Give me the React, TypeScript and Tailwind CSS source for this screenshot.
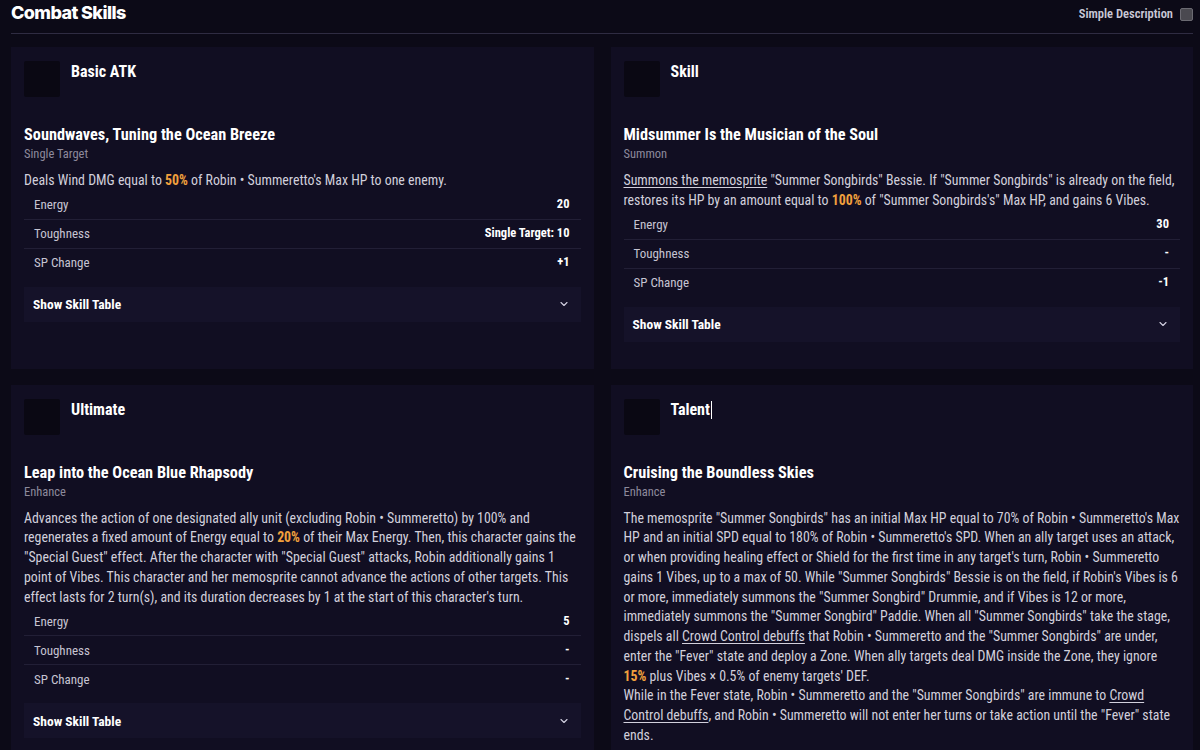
import { ChevronDown } from 'lucide-react';
import type { ReactNode } from 'react';

type Skill = {
  kind: string;
  name: string;
  tag: string;
  desc: ReactNode;
  stats?: [string, string][];
  caret?: boolean;
};

const Hi = ({ children }: { children: ReactNode }) => <span className="font-bold text-[#f2a03d]">{children}</span>;
const Link = ({ children }: { children: ReactNode }) => <span className="underline underline-offset-2">{children}</span>;

const skills: Skill[] = [
  {
    kind: 'Basic ATK',
    name: 'Soundwaves, Tuning the Ocean Breeze',
    tag: 'Single Target',
    desc: <>Deals Wind DMG equal to <Hi>50%</Hi> of Robin • Summeretto's Max HP to one enemy.</>,
    stats: [['Energy', '20'], ['Toughness', 'Single Target: 10'], ['SP Change', '+1']],
  },
  {
    kind: 'Skill',
    name: 'Midsummer Is the Musician of the Soul',
    tag: 'Summon',
    desc: (
      <>
        <Link>Summons the memosprite</Link> "Summer Songbirds" Bessie. If "Summer Songbirds" is already on the field, restores its HP by an amount equal to <Hi>100%</Hi> of "Summer Songbirds's" Max HP, and gains 6 Vibes.
      </>
    ),
    stats: [['Energy', '30'], ['Toughness', '-'], ['SP Change', '-1']],
  },
  {
    kind: 'Ultimate',
    name: 'Leap into the Ocean Blue Rhapsody',
    tag: 'Enhance',
    desc: (
      <>
        Advances the action of one designated ally unit (excluding Robin • Summeretto) by 100% and regenerates a fixed amount of Energy equal to <Hi>20%</Hi> of their Max Energy. Then, this character gains the "Special Guest" effect. After the character with "Special Guest" attacks, Robin additionally gains 1 point of Vibes. This character and her memosprite cannot advance the actions of other targets. This effect lasts for 2 turn(s), and its duration decreases by 1 at the start of this character's turn.
      </>
    ),
    stats: [['Energy', '5'], ['Toughness', '-'], ['SP Change', '-']],
  },
  {
    kind: 'Talent',
    name: 'Cruising the Boundless Skies',
    tag: 'Enhance',
    caret: true,
    desc: (
      <>
        The memosprite "Summer Songbirds" has an initial Max HP equal to 70% of Robin • Summeretto's Max HP and an initial SPD equal to 180% of Robin • Summeretto's SPD. When an ally target uses an attack, or when providing healing effect or Shield for the first time in any target's turn, Robin • Summeretto gains 1 Vibes, up to a max of 50. While "Summer Songbirds" Bessie is on the field, if Robin's Vibes is 6 or more, immediately summons the "Summer Songbird" Drummie, and if Vibes is 12 or more, immediately summons the "Summer Songbird" Paddie. When all "Summer Songbirds" take the stage, dispels all <Link>Crowd Control debuffs</Link> that Robin • Summeretto and the "Summer Songbirds" are under, enter the "Fever" state and deploy a Zone. When ally targets deal DMG inside the Zone, they ignore <Hi>15%</Hi> plus Vibes × 0.5% of enemy targets' DEF.
        <br />
        While in the Fever state, Robin • Summeretto and the "Summer Songbirds" are immune to <Link>Crowd Control debuffs</Link>, and Robin • Summeretto will not enter her turns or take action until the "Fever" state ends.
      </>
    ),
  },
];

function SkillCard({ s }: { s: Skill }) {
  return (
    <div className="bg-[#110e22] px-[13px] pt-[14px] pb-[27px]">
      <div className="flex gap-[11px]">
        <div className="w-[36px] h-[36px] bg-[#0a0813] rounded-[2px]" />
        <div className="flex items-start text-[16px] leading-[22px] font-bold text-white">
          {s.kind}
          {s.caret && <span className="ml-[1px] mt-[2px] w-px h-[18px] bg-white" />}
        </div>
      </div>

      <h3 className="mt-[27px] text-[16.3px] leading-[22px] font-bold text-white">{s.name}</h3>
      <p className="text-[12.5px] leading-[16px] text-[#8d8a9c]">{s.tag}</p>

      <p className="mt-[9px] text-[13.85px] leading-[19.75px] text-[#d2d0dc]">{s.desc}</p>

      {s.stats && (
        <div>
          {s.stats.map(([k, v], i) => (
            <div
              key={k}
              className={`flex items-center justify-between pl-[10px] pr-[11px] ${i < s.stats!.length - 1 ? 'h-[29px] border-b border-[#221f36]' : 'h-[28px]'}`}
            >
              <span className="text-[13px] text-[#c6c4d2]">{k}</span>
              <span className="text-[12.5px] font-bold text-white">{v}</span>
            </div>
          ))}
        </div>
      )}

      <div className="mt-[10px] h-[35px] bg-[#151229] flex items-center justify-between pl-[9px] pr-[11px]">
        <span className="text-[13.5px] font-bold text-white">Show Skill Table</span>
        <ChevronDown size={12} strokeWidth={2.25} className="text-[#d2d0e0]" />
      </div>
    </div>
  );
}

export default function App() {
  return (
    <div className="min-h-screen bg-[#0c0a17] pl-[11px] pr-[7px] font-['Roboto_Condensed',_'Roboto',sans-serif]">
      <div className="flex items-center justify-between h-[34px] border-b border-[#2f2c42] pb-[5px]">
        <h2 className="font-['Inter',sans-serif] text-[18px] font-extrabold tracking-[-0.6px] text-white -mt-[4px]">Combat Skills</h2>
        <label className="flex items-center gap-[7px]">
          <span className="text-[12.5px] font-semibold text-[#c9c8d6]">Simple Description</span>
          <span className="w-[13px] h-[13px] rounded-[2px] bg-[#4a4950] border border-[#6b6a72]" />
        </label>
      </div>

      <div className="grid grid-cols-2 gap-x-[17px] gap-y-[16px] mt-[13px] pb-4">
        {skills.map(s => <SkillCard key={s.kind} s={s} />)}
      </div>
    </div>
  );
}
